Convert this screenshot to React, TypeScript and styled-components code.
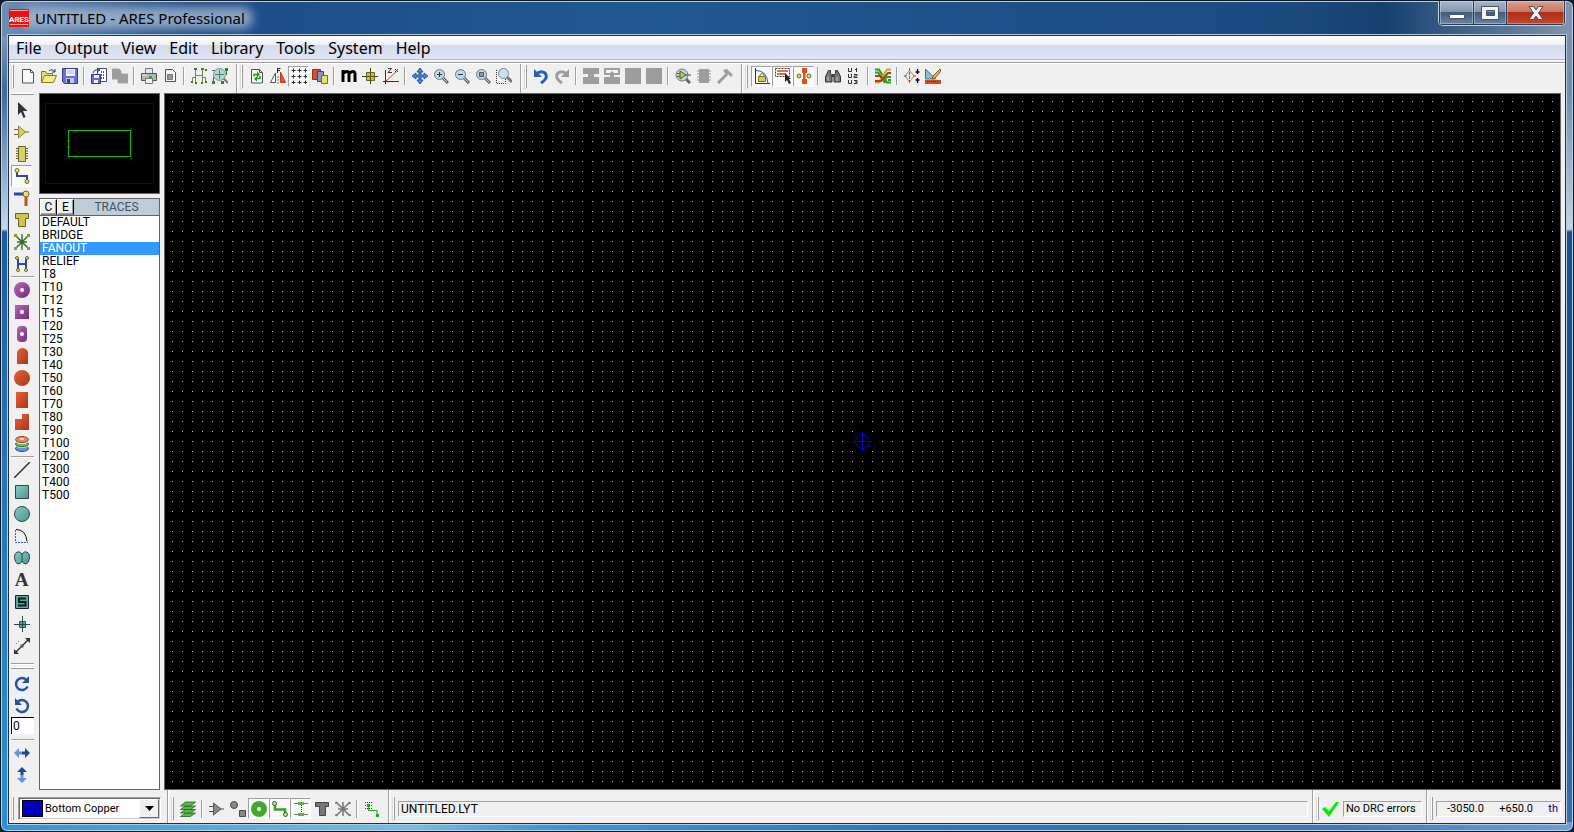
import React, { useState } from "react";
import styled, { createGlobalStyle, css } from "styled-components";

const uiFont = `"Noto Sans", "Open Sans", sans-serif`;
const smallFont = `Roboto, "Liberation Sans", sans-serif`;

const GlobalStyle = createGlobalStyle`
  * { box-sizing: border-box; }
  body { margin: 0; background: #0b1a2e; font-family: ${uiFont}; color: #000; }
  button, input, select { font: inherit; color: inherit; margin: 0; padding: 0; }
  ul { margin: 0; padding: 0; list-style: none; }
`;

/* ---------- window frame ---------- */

const Window = styled.div`
  display: flex;
  flex-direction: column;
  height: 100vh;
  padding: 0 7px 7px;
  border: 1px solid #0c1724;
  border-radius: 7px;
  box-shadow: inset 0 0 0 1px #b9cfe2;
  background:
    linear-gradient(90deg, #6f8db0 0, #5f83ad 30px, transparent 190px) top / 100% 36px no-repeat,
    linear-gradient(90deg, transparent 84%, #16406f 88%, #5c7797 96%, #8296ae) top / 100% 36px no-repeat,
    linear-gradient(90deg, #1c4783, #205890 40%, #1c4d84 75%, #163f6e) top / 100% 36px no-repeat,
    linear-gradient(90deg, #2b95d2, #49abdb 12%, #77bde2 26%, #3b9bd3 34%, #2777b4 60%, #3f7ab4 85%, #6aa0d6) bottom / 100% 9px no-repeat,
    linear-gradient(#7d95b0 36px, #3f6a9c 90px, #c3d8ea 228px, #1d5b9c 231px, #2271b3 50%, #2a90cd) left / 50% 100% no-repeat,
    linear-gradient(#7d90a8 36px, #6f8eb0 90px, #c3d3e2 228px, #18508c 231px, #1d5591 70%, #3770ae) right / 50% 100% no-repeat;
`;

const TitleBar = styled.header`
  display: flex;
  align-items: flex-start;
  justify-content: space-between;
  flex: none;
  height: 34px;
  padding-left: 1px;
`;

const Title = styled.h1`
  position: relative;
  display: flex;
  align-items: center;
  gap: 6px;
  margin: 0;
  height: 34px;
  font-size: 15px;
  line-height: 20px;
  font-weight: 400;
  &::before {
    content: "";
    position: absolute;
    inset: 6px -8px 6px 12px;
    border-radius: 10px;
    background: #a5b9d2cc;
    filter: blur(5px);
  }
  > * { position: relative; }
`;

const Caption = styled.div`
  display: flex;
  height: 25px;
  border: 1px solid #c3d0de;
  border-top: 0;
  border-radius: 0 0 5px 5px;
  overflow: hidden;
`;

const CaptionButton = styled.button<{ $w: number; $close?: boolean }>`
  display: grid;
  place-items: center;
  width: ${(p) => p.$w}px;
  border: 1px solid #2a3a50;
  border-top: 0;
  box-shadow: inset 0 0 0 1px #ffffff55;
  background: ${(p) =>
    p.$close
      ? "linear-gradient(#d9a090, #c9765f 48%, #b02d18 50%, #c4482c)"
      : "linear-gradient(#a9b8c9, #8296ad 48%, #3f5c7c 50%, #6a84a0)"};
  & + & { border-left: 0; }
`;

const Client = styled.div`
  display: flex;
  flex-direction: column;
  flex: 1;
  min-height: 0;
  border: 1px solid #1c2f4a;
  outline: 1px solid #b4cbe0;
  background: #f0f0f0;
`;

/* ---------- menu ---------- */

const MenuBar = styled.nav`
  display: flex;
  flex: none;
  height: 27px;
  padding-left: 7px;
  gap: 13px;
  border-bottom: 1px solid #a0a0a0;
  background: linear-gradient(#fff, #eef0f8 9px, #d5dbed 9px, #dfe5f4 23px, #b6bcd0 23px, #b6bcd0 24px, #f4f4f4 24px);
`;

const MenuButton = styled.button`
  height: 24px;
  border: 0;
  background: none;
  font-size: 16px;
  line-height: 24px;
`;

/* ---------- toolbars ---------- */

const ToolRow = styled.div`
  display: flex;
  flex: none;
  height: 30px;
  border-top: 1px solid #fff;
`;

const ToolGroup = styled.div<{ $last?: boolean }>`
  display: flex;
  align-items: center;
  padding: 0 6px 5px 3px;
  ${(p) => !p.$last && css`border-right: 1px solid #a0a0a0; box-shadow: 1px 0 #fff; margin-right: 1px;`}
`;

const Grip = styled.span`
  flex: none;
  width: 2px;
  height: 23px;
  margin-right: 3px;
  border-right: 1px solid #9a9a9a;
  border-left: 1px solid #fff;
  box-shadow: -1px 1px #d8d8d8;
`;

const Sep = styled.span`
  flex: none;
  width: 2px;
  height: 18px;
  margin: 0 3px;
  border-left: 1px solid #a0a0a0;
  border-right: 1px solid #fff;
`;

const ToolButton = styled.button<{ $pressed?: boolean }>`
  display: grid;
  place-items: center;
  flex: none;
  width: 21px;
  height: 21px;
  border: 1px solid transparent;
  background: none;
  ${(p) =>
    p.$pressed &&
    css`
      border-color: #a0a0a0 #fff #fff #a0a0a0;
      background: #f9f9f9;
    `}
`;

/* ---------- work area ---------- */

const Work = styled.main`
  display: flex;
  flex: 1;
  min-height: 0;
`;

const ModeBar = styled.div`
  display: flex;
  flex-direction: column;
  flex: none;
  width: 30px;
  padding-left: 2px;
`;

const ModeGrip = styled.span`
  flex: none;
  width: 23px;
  height: 2px;
  margin-bottom: 4px;
  border-top: 1px solid #fff;
  border-bottom: 1px solid #9a9a9a;
`;

const ModeButton = styled(ToolButton)`
  height: 22px;
`;

const ModeSep = styled.span<{ $wide?: boolean }>`
  flex: none;
  width: 23px;
  height: 2px;
  margin: ${(p) => (p.$wide ? "6px 0 2px" : "1px 0")};
  border-top: 1px solid #a0a0a0;
  border-bottom: 1px solid #fff;
`;

const LetterIcon = styled.span`
  font: 700 19px/20px "Liberation Serif", serif;
  color: #333;
`;

const AngleInput = styled.input`
  width: 23px;
  height: 17px;
  margin-bottom: 4px;
  padding: 0 1px;
  border: 0;
  border-top: 1px solid #000;
  border-left: 1px solid #000;
  background: #fff;
  font: 12px/15px ${smallFont};
`;

const Side = styled.aside`
  display: flex;
  flex-direction: column;
  flex: none;
  width: 121px;
  gap: 4px;
  margin-right: 4px;
`;

const Preview = styled.div`
  flex: none;
  height: 101px;
  border: 1px solid #646464;
  background: #000;
  svg { display: block; }
`;

const Selector = styled.section`
  flex: 1;
  min-height: 0;
  border: 1px solid #646464;
  background: #fff;
  font: 12px/13px ${smallFont};
`;

const SelectorHead = styled.div`
  display: flex;
  height: 17px;
  border-bottom: 1px solid #646464;
  background: #bfccd8;
  h2 {
    flex: 1;
    margin: 0;
    font: inherit;
    line-height: 16px;
    color: #44525e;
    text-align: center;
  }
`;

const HeadButton = styled.button`
  width: 17px;
  border: 1px solid #fff;
  border-right: 1px solid #000;
  border-bottom-color: #888;
  background: #f0f0f0;
  box-shadow: inset -1px -1px #a0a0a0;
`;

const TraceButton = styled.button<{ $on: boolean }>`
  display: block;
  width: 100%;
  height: 13px;
  padding-left: 2px;
  border: 0;
  text-align: left;
  line-height: 13px;
  background: ${(p) => (p.$on ? "#3399ff" : "none")};
  color: ${(p) => (p.$on ? "#fff" : "#000")};
`;

const Canvas = styled.div`
  position: relative;
  display: grid;
  place-items: center;
  flex: 1;
  min-width: 0;
  margin-right: 4px;
  border: 1px solid #646464;
  background: #000;
`;

const DotGrid = styled.svg`
  position: absolute;
  inset: 0;
  width: 100%;
  height: 100%;
`;

const Marker = styled.svg`
  position: relative;
`;

/* ---------- status bar ---------- */

const StatusBar = styled.footer`
  display: flex;
  flex: none;
  height: 33px;
  font: 11px/14px ${smallFont};
`;

const StatusGroup = styled(ToolGroup)<{ $grow?: boolean; $tight?: boolean }>`
  padding: 4px ${(p) => (p.$tight ? 4 : 6)}px 0 3px;
  ${(p) => p.$grow && "flex: 1;"}
`;

const LayerBox = styled.label`
  display: flex;
  align-items: center;
  width: 143px;
  height: 23px;
  margin-left: 1px;
  border: 1px solid #a0a0a0;
  border-right-color: #fff;
  border-bottom-color: #fff;
  box-shadow: inset 1px 1px #696969, inset -1px -1px #c8c8c8;
  background: #fff;
`;

const Swatch = styled.span`
  width: 21px;
  height: 17px;
  margin-left: 3px;
  border: 1px solid #000;
  background: #0000bf;
`;

const LayerSelect = styled.select`
  flex: 1;
  height: 19px;
  padding-left: 2px;
  border: 0;
  background: none;
  appearance: none;
  font: 11px/19px ${smallFont};
`;

const DropArrow = styled.span`
  display: grid;
  place-items: center;
  width: 20px;
  height: 19px;
  margin-right: 1px;
  border: 1px solid #fff;
  border-right-color: #696969;
  border-bottom-color: #696969;
  background: #f0f0f0;
  pointer-events: none;
`;

const Field = styled.output<{ $w?: number; $large?: boolean }>`
  display: flex;
  align-items: center;
  justify-content: space-between;
  height: 16px;
  padding: 0 2px;
  border: 1px solid #a0a0a0;
  border-right-color: #fff;
  border-bottom-color: #fff;
  white-space: nowrap;
  font-size: ${(p) => (p.$large ? 12 : 11)}px;
  ${(p) => (p.$w ? `width: ${p.$w}px; flex: none;` : "flex: 1;")}
`;

const Coords = styled(Field)`
  padding: 0 2px 0 10px;
  em { font-style: normal; color: #000080; }
`;

/* ---------- icons ---------- */

const dk = "#4a4a4a";
const page = <path d="M2.500 1.500h8l3 3v10.500h-11z" fill="#f4f9fc" stroke="#555" />;
const sheet = <path d="M10.500 1.500v3h3" fill="none" stroke="#555" />;
const lens = (
  <>
    <path d="M10 10l5 5" stroke="#666" strokeWidth="3" />
    <path d="M10 10l4 4" stroke="#c9c9c9" />
    <circle cx="6.500" cy="6.500" r="5" fill="#b9d7ea" stroke="#777" />
  </>
);

const icons: Record<string, React.ReactNode> = {
  new: <>{page}{sheet}</>,
  open: (
    <>
      <path d="M.5 14.500v-11h4l1 2h6v3" fill="#e8dc80" stroke="#8a7a20" />
      <path d="M.5 14.500l3-7h12l-3 7z" fill="#f4ea8e" stroke="#8a7a20" />
      <path d="M8 3q3-3 6 1m0-3v3h-3" fill="none" stroke="#1d3d7c" />
    </>
  ),
  save: (
    <>
      <path d="M.5.5h15v15H2.500l-2-2z" fill="#6a6ed0" stroke="#3b3d8c" />
      <path d="M4 1h9v7H4z" fill="#eef0fa" />
      <path d="M5 3h7M5 5h7" stroke="#b5b9dd" />
      <path d="M4 10h8v5H4z" fill="#c4c7d8" />
      <path d="M5 11h3v4H5z" fill="#3b3d8c" />
    </>
  ),
  import: (
    <>
      <path d="M6.500.5h9v13h-9z" fill="#fff" stroke="#444a9c" />
      <path d="M10 4h4M10 7h4M10 10h4" stroke="#e03010" strokeWidth="2" strokeDasharray="1 1" />
      <path d="M2 5q1-4 6-3M6 0l3 2-3 2" fill="none" stroke="#1d3d7c" />
      <path d="M.5 6.500h9v9h-9z" fill="#6a6ed0" stroke="#333580" />
      <path d="M3 7h5v3H3zM3 12h4v3H3z" fill="#eef0fa" />
    </>
  ),
  export: <path d="M0 1h7l2 2v3h7v9H6v-4H0z" fill="#9d9d9d" stroke="#a6a6a6" />,
  print: (
    <>
      <path d="M4.500 5.500v-5h7v5" fill="#dbe9f4" stroke="#777" />
      <path d="M.5 5.500h15v7H.5z" fill="#b5b5b5" stroke="#555" />
      <path d="M4.500 10.500h7v5h-7z" fill="#eef4f8" stroke="#777" />
      <path d="M8 8h3v2H8z" fill="#1db31d" />
      <path d="M1 7h5" stroke="#eee" />
    </>
  ),
  area: (
    <>
      <path d="M3.500 1.500h7l3 3v9h-10z" fill="#f4f6f8" stroke="#555" />
      <path d="M5.500 6.500h5v5h-5z" fill="#8b959c" stroke="#333" strokeDasharray="1 1" />
    </>
  ),
  netlist: (
    <>
      <path d="M4.500 2v12M11.500 2v12M4.500 7.500h7M1.500 14V9.500h3M14.500 14V9.500h-3" fill="none" stroke="#6c8f4c" />
      <path d="M3 0h3v2H3zM10 0h3v2h-3zM0 13h2v2H0zM4 14h2v2H4zM10 14h2v2h-2zM14 13h2v2h-2zM14 1h2v2h-2z" fill="#3f7a28" />
    </>
  ),
  netview: (
    <>
      <path d="M1.500 14V9M14.500 1v6M0 2.500h4" stroke="#3f7a28" />
      <path d="M11 10l5 5" stroke="#777" strokeWidth="2" />
      <circle cx="7.500" cy="6.500" r="6" fill="#b5d5dc" stroke="#78919c" />
      <path d="M3 6.500h9M7.500 2v9" stroke="#4d8a4a" />
      <path d="M0 13h3v3H0zM13 0h3v3h-3zM9 13h3v3H9z" fill="#3f7a28" />
    </>
  ),
  refresh: (
    <>
      {page}{sheet}
      <path d="M5 8.500V6.500h3M11 8v2.500H8" fill="none" stroke="#1b9c1b" strokeWidth="1.500" />
      <path d="M8 3.500l3 3-3 3zM8 8l-3 3 3 2.500z" fill="#1b9c1b" />
    </>
  ),
  flip: (
    <>
      <path d="M5.500 5v9.500H.5z" fill="#fff" stroke="#555" />
      <path d="M10.500 4v10.500h5z" fill="#e0512c" stroke="#b43d1c" />
      <path d="M8 16V7" stroke="#777" strokeDasharray="2 1" />
      <path d="M7.500 5V.5h3M8 2.500h2" fill="none" stroke="#222" />
    </>
  ),
  grid: (
    <>
      <path d="M0 2.500h16M0 8.500h16M0 14.500h16M2.500 0v16M8.500 0v16M14.500 0v16" stroke="#999" strokeDasharray="1 1" />
      <path d="M1 2.500h3M7 2.500h3M13 2.500h3M1 8.500h3M7 8.500h3M13 8.500h3M1 14.500h3M7 14.500h3M13 14.500h3M2.500 1v3M8.500 1v3M14.500 1v3M2.500 7v3M8.500 7v3M14.500 7v3M2.500 13v3M8.500 13v3M14.500 13v3" stroke="#333" />
    </>
  ),
  layers: (
    <>
      <path d="M.5 1.500h8v10h-8z" fill="#cc5530" stroke="#8f3316" />
      <path d="M5.500 3.500h6v10h-6z" fill="#8092e0" stroke="#39437c" />
      <path d="M9.500 7.500h6v8h-6z" fill="#f0e060" stroke="#7c7020" />
    </>
  ),
  m: <path d="M2 14V2M2 5.500q5-4 6 0V14M8 5.500q5-4 6 0V14" fill="none" stroke="#000" strokeWidth="3" />,
  origin: (
    <>
      <path d="M8.500 0v16M0 8.500h16" stroke="#3c3c2c" />
      <path d="M4.500 4.500h8v8h-8z" fill="#c8be30" stroke="#6b6420" />
      <path d="M8.500 4v9M4 8.500h9" stroke="#56501c" />
    </>
  ),
  zx: (
    <>
      <path d="M2.500 2v14M0 13.500h16" stroke="#333" />
      <path d="M3 13L13 4" stroke="#e0401c" />
      <path d="M5 .5h3.500l-3.500 4h4M12 1l3 3M15 1l-3 3" fill="none" stroke="#333" />
    </>
  ),
  pan: (
    <path d="M8 0l3 4H9v3h3V5l4 3-4 3V9H9v3h2l-3 4-3-4h2V9H4v2L0 8l4-3v2h3V4H5z" fill="#3b86dc" stroke="#164c94" strokeWidth=".8" />
  ),
  zoomin: <>{lens}<path d="M4 6.500h5M6.500 4v5" stroke="#333" /></>,
  zoomout: <>{lens}<path d="M4 6.500h5" stroke="#333" /></>,
  zoomall: <>{lens}<path d="M4.500 4.500h4v4h-4z" fill="#8a9aa6" stroke="#555" /></>,
  zoomarea: (
    <>
      <path d="M.5 2v13.500h9V10" fill="none" stroke="#333" strokeDasharray="1 1" />
      <path d="M11 9l5 5" stroke="#777" strokeWidth="3" />
      <circle cx="7.500" cy="5.500" r="5" fill="#c8e0f0" stroke="#888" />
    </>
  ),
  undo: (
    <>
      <path d="M3 6q5-4 9-1 4 5-4 10" fill="none" stroke="#2a5fae" strokeWidth="3" />
      <path d="M1 1v8h8z" fill="#2a5fae" />
    </>
  ),
  redo: (
    <>
      <path d="M13 6Q8 2 4 5q-4 5 4 10" fill="none" stroke="#9d9d9d" strokeWidth="3" />
      <path d="M15 1v8H7z" fill="#9d9d9d" />
    </>
  ),
  blockcopy: <path d="M0 0h16v6h-5v3h5v7H0V9h5V6H0z" fill="#9d9d9d" />,
  blockmove: (
    <>
      <path d="M1 1h14v5H1z" fill="#f6f6f6" stroke="#9d9d9d" strokeWidth="2" />
      <path d="M8 3l4 4h-2v2h6v7H0V9h6V7H4z" fill="#9d9d9d" />
    </>
  ),
  block: <path d="M0 0h16v16H0z" fill="#9d9d9d" />,
  pick: (
    <>
      <path d="M10 10l5 5" stroke="#666" strokeWidth="3" />
      <circle cx="7" cy="7" r="6" fill="#b9d7ea" stroke="#777" />
      <path d="M2 5.500h3M2 8.500h3M11 7h5" stroke="#5c5c1c" />
      <path d="M5 3l6 4-6 4z" fill="#c8c83c" stroke="#5c5c1c" />
    </>
  ),
  package: (
    <>
      <path d="M3 1h10v14H3z" fill="#9d9d9d" />
      <path d="M1 3h14M1 6h14M1 9h14M1 12h14" stroke="#9d9d9d" />
    </>
  ),
  hammer: (
    <>
      <path d="M1 15L10 6" stroke="#9d9d9d" strokeWidth="3" />
      <path d="M6 2l4-1 6 6-2 2-3-3-2 1z" fill="#9d9d9d" />
    </>
  ),
  lock: (
    <>
      <path d="M1.500 0v15.500H16" fill="none" stroke="#333" />
      <path d="M2 2.500q11 0 12 13" fill="none" stroke="#3d5cb0" />
      <path d="M4.500 8.500h7v5h-7z" fill="#d8cc40" stroke="#7c7420" />
      <path d="M6 8V6.500q2-2 4 0V8" fill="none" stroke="#7c7420" />
    </>
  ),
  select: (
    <>
      <path d="M.5.500h14v8H.5z" fill="none" stroke="#444" strokeDasharray="2 1" />
      <path d="M2 3h11M2 6h9" stroke="#dc4420" strokeWidth="1.500" />
      <path d="M10 5v9l2-2 2 4 2-1-2-4h2z" fill="#222" />
    </>
  ),
  neck: (
    <>
      <path d="M6 0h5v5H9.500v6H11v5H6v-5h1V5H6z" fill="#e0501c" />
      <circle cx="3" cy="8" r="2" fill="#e8dc50" stroke="#6c6420" />
      <circle cx="13" cy="8" r="2" fill="#e8dc50" stroke="#6c6420" />
    </>
  ),
  find: (
    <>
      <path d="M3.500 2.500h2v3l1.500 2v6.500H.5V8.500zM10.500 2.500h2l3 6V14H9V7.500l1.500-2z" fill="#777" stroke="#333" />
      <path d="M6 6h4v3H6z" fill="#444" />
      <path d="M3 9v4M12 9v4" stroke="#ccc" />
    </>
  ),
  annotate: (
    <path
      d="M2.500 0v3.500h3V0M2.500 6v3.500h3V6M2.500 12v3.500h3V12M9 1.500h1.500M10.500 0v4M8 6.500h3v1.500h-3v1.500h3.500M8 12.500h3v3H8M9 14h2"
      fill="none" stroke="#333"
    />
  ),
  autoroute: (
    <>
      <path d="M0 1.500h4l8 13h4M0 4.500h3l7 10.500" fill="none" stroke="#2e9c20" strokeWidth="2" />
      <path d="M16 1.500h-4L4 14.500H0" fill="none" stroke="#b8b81c" strokeWidth="2" />
      <path d="M16 5h-3L6 13H0M0 8h5l3 3" fill="none" stroke="#c83020" strokeWidth="2" />
      <path d="M16 9h-4l-2 2M16 12h-3" fill="none" stroke="#2e9c20" strokeWidth="2" />
    </>
  ),
  connect: (
    <>
      <path d="M5.500 2.500L1 8l4.500 6M5.500 2.500L10 8l-4.500 6" fill="none" stroke="#c88040" />
      <path d="M5.500 0v16M0 8h3M9 8h3" stroke="#3c6cb0" strokeDasharray="3 1" />
      <path d="M13.500 1v5M13.500 10v5M11.500 4h4M11.500 12h4" stroke="#111" strokeWidth="1.500" />
    </>
  ),
  design: (
    <>
      <path d="M.5 1v10h10z" fill="#7fc4cc" stroke="#2c7c88" />
      <path d="M15 1L8 8l-1 3 3-1 6-7z" fill="#e8b060" stroke="#8c5020" />
      <path d="M0 12h16v4H0z" fill="#cc4c20" />
      <path d="M2 13.500h12" stroke="#7c2408" strokeDasharray="1 1" />
    </>
  ),
  cursor: <path d="M4 0v13l3-3 2.500 6 2-1L9 9h4.500z" fill="#333" />,
  component: (
    <>
      <path d="M0 5.500h5M0 10.500h5M11 8h4" stroke="#6c6420" />
      <path d="M4.500 2v12L11.500 8z" fill="#d8cc58" stroke="#8c8430" />
    </>
  ),
  chip: (
    <>
      <path d="M2 2.500h12M2 5h12M2 7.500h12M2 10h12M2 12.500h12" stroke="#5c5620" />
      <path d="M4.500.5h7v15h-7z" fill="#d8d068" stroke="#6c6420" />
    </>
  ),
  trace: (
    <>
      <path d="M3 3v5h10v5" fill="none" stroke="#2a47b0" strokeWidth="2" />
      <circle cx="3" cy="2.500" r="2" fill="#f0e440" stroke="#6c6420" />
      <circle cx="13" cy="13.500" r="2" fill="#f0e440" stroke="#6c6420" />
    </>
  ),
  via: (
    <>
      <path d="M0 4h10" stroke="#2a47a0" strokeWidth="3" />
      <path d="M12 5v11" stroke="#cc4c20" strokeWidth="3" />
      <circle cx="12" cy="4" r="3" fill="#e4dc80" stroke="#6c6420" />
    </>
  ),
  pad: <path d="M1.500 1.500h13v5h-3v8h-7v-8h-3z" fill="#d0c450" stroke="#6c6420" />,
  ratsnest: (
    <>
      <path d="M1 1l14 14M15 1L1 15M8 1v14M3 8h10" stroke="#3c6c34" strokeWidth="1.500" />
      <path d="M0 0h3v3H0zM13 0h3v3h-3zM0 13h3v3H0zM13 13h3v3h-3zM7 0h2v2H7zM7 14h2v2H7z" fill="#8c9c30" />
    </>
  ),
  connectivity: (
    <>
      <path d="M4 3v10M12 3v10M4 8h8" stroke="#2a47b0" strokeWidth="2" />
      <g fill="#f0e440" stroke="#6c6420">
        <circle cx="3" cy="2" r="1.500" /><circle cx="13" cy="2" r="1.500" />
        <circle cx="4" cy="14" r="1.500" /><circle cx="12" cy="14" r="1.500" />
      </g>
    </>
  ),
  padround: <><circle cx="8" cy="8" r="8" fill="url(#purple)" /><circle cx="8" cy="8" r="2" fill="#fff" /></>,
  padsquare: <><path d="M1 1h14v14H1z" fill="url(#purple)" /><circle cx="8" cy="8" r="2" fill="#fff" /></>,
  paddil: <><rect x="3" width="10" height="16" rx="4" fill="url(#purple)" /><circle cx="8" cy="8" r="2" fill="#fff" /></>,
  padedge: <path d="M3 16V4q2-4 5.500-4T14 4v12z" fill="url(#rust)" />,
  smtround: <circle cx="8" cy="8" r="8" fill="url(#rust)" />,
  smtrect: <path d="M2 0h12v16H2z" fill="url(#rust)" />,
  smtpoly: <path d="M8 0h7v16H1V5h7z" fill="url(#rust)" />,
  padstack: (
    <>
      <ellipse cx="8" cy="12.500" rx="6.500" ry="3" fill="#6c90e0" stroke="#39437c" />
      <ellipse cx="8" cy="10" rx="6" ry="2" fill="#b8cce8" />
      <ellipse cx="8" cy="8" rx="6.500" ry="2.500" fill="#74c848" stroke="#2c6c1c" />
      <ellipse cx="8" cy="6" rx="6" ry="2" fill="#d0e8c0" />
      <ellipse cx="8" cy="3.500" rx="6.500" ry="3" fill="#f08060" stroke="#8f4430" />
      <ellipse cx="8" cy="3" rx="2" ry="1" fill="#fff" />
    </>
  ),
  line: <path d="M0 16L16 0" stroke="#333" strokeWidth="1.500" />,
  box: <path d="M1.500 1.500h13v13h-13z" fill="url(#teal)" stroke="#2c4c4c" />,
  circle: <circle cx="8" cy="8" r="7.500" fill="url(#teal)" stroke="#2c4c4c" />,
  arc: (
    <>
      <path d="M2 1.500q10 0 11 12" fill="none" stroke="#111" />
      <path d="M1.500 2v12.500H14" fill="none" stroke="#2060dc" strokeDasharray="2 1" />
    </>
  ),
  path: (
    <path d="M8 4Q6 1 3 2 0 4 .5 8 1 13 4 14q3 0 4-3 1 3 4 3 3-1 3.500-6Q16 3 13 2 10 1 8 4zv7" fill="url(#teal)" stroke="#2c4c4c" />
  ),
  symbol: (
    <>
      <path d="M1.500 1.500h13v13h-13z" fill="#5ca89c" stroke="#112233" />
      <path d="M12 4.500H5V8h6.500v3.500H4" fill="none" stroke="#0c1c1c" strokeWidth="2" />
    </>
  ),
  marker: (
    <>
      <path d="M8.500 0v16M0 8.500h16" stroke="#444" />
      <path d="M5.500 5.500h6v6h-6z" fill="#4ca8a8" stroke="#245c5c" />
      <path d="M8.500 5v7M5 8.500h7" stroke="#1c4c4c" />
    </>
  ),
  measure: (
    <>
      <path d="M2 14L14 2" stroke="#333" strokeWidth="1.500" />
      <path d="M16 0v5l-5-5zM0 16v-5l5 5z" fill="#333" />
      <path d="M6.500 6.500h3v3h-3z" fill="#555" />
      <path d="M2 6l4-4" stroke="#555" strokeDasharray="1 2" />
    </>
  ),
  rotcw: (
    <>
      <path d="M13.500 10.500A6 6 0 1 1 12.500 4" fill="none" stroke="#2a50a8" strokeWidth="2.500" />
      <path d="M15 0v7H8z" fill="#2a50a8" />
    </>
  ),
  rotccw: (
    <>
      <path d="M2.500 10.500A6 6 0 1 0 3.500 4" fill="none" stroke="#2a50a8" strokeWidth="2.500" />
      <path d="M1 0v7h7z" fill="#2a50a8" />
    </>
  ),
  mirrorh: (
    <>
      <path d="M0 8l5-5v3.500h3v3H5V13z" fill="#6c90dc" />
      <path d="M16 8l-5-5v3.500H8v3h3V13z" fill="#1c48a0" />
    </>
  ),
  mirrorv: (
    <>
      <path d="M8 16l5-5H9.500V8h-3v3H3z" fill="#6c90dc" />
      <path d="M8 0l5 5H9.500v3h-3V5H3z" fill="#1c48a0" />
    </>
  ),
  layerset: (
    <g fill="#5cb848" stroke="#24601c" strokeWidth=".8">
      <path d="M.5 15.500l5-3.500h10l-5 3.500z" /><path d="M.5 12l5-3.500h10l-5 3.500z" />
      <path d="M.5 8.500l5-3.500h10l-5 3.500z" /><path d="M.5 5l5-4h10l-5 4z" />
    </g>
  ),
  fcomponent: (
    <>
      <path d="M0 5.500h5M0 10.500h5M11 8h4" stroke={dk} />
      <path d="M4.500 2v12L12 8z" fill="#888" stroke="#555" />
    </>
  ),
  fgraphic: (
    <>
      <circle cx="4" cy="4" r="3.500" fill="#888" stroke={dk} />
      <path d="M9.500 9.500h6v6h-6z" fill="#888" stroke={dk} />
    </>
  ),
  fpin: <><circle cx="8" cy="8" r="8" fill="#46a830" /><circle cx="8" cy="8" r="2" fill="#fff" /></>,
  ftrack: (
    <>
      <path d="M3 3v5.500h10V13" fill="none" stroke="#3c9c2c" strokeWidth="2.500" />
      <circle cx="2.500" cy="2.500" r="2" fill="#b8ec80" stroke="#2c6c1c" />
      <circle cx="13.500" cy="13.500" r="2" fill="#b8ec80" stroke="#2c6c1c" />
    </>
  ),
  fvia: (
    <>
      <path d="M1 2.500h14M1 13.500h14" stroke="#5c8c4c" />
      <path d="M5 1h6v3H5zM5 12h6v3H5z" fill="#58b840" />
      <path d="M8.500 4v8" stroke="#333" strokeDasharray="1 1" />
    </>
  ),
  fzone: <path d="M1.500 1.500h13v4h-3v9h-6v-9h-4z" fill="#777" stroke="#444" />,
  frats: (
    <path d="M1 1l14 14M15 1L1 15M8 1v14M3 8h10M0 2h3M13 2h3M0 14h3M13 14h3" stroke="#777" strokeWidth="1.500" />
  ),
  realtime: (
    <>
      <path d="M1 1.500h7M1 4.500h7M1 7.500h7" stroke="#444" strokeDasharray="1 1" />
      <path d="M4.500 4v5.500H13V14" fill="none" stroke="#2c9c1c" />
      <path d="M3 3h3v3H3zM12 13h3v3h-3z" fill="#18b018" />
    </>
  ),
};

function Icon({ name }: { name: string }) {
  if (name === "text") return <LetterIcon>A</LetterIcon>;
  return (
    <svg width="16" height="16" viewBox="0 0 16 16" aria-hidden="true">
      {icons[name]}
    </svg>
  );
}

const HiddenDefs = styled.svg`
  position: absolute;
`;

function Gradients() {
  const stops: [string, string, string][] = [
    ["purple", "#b868b8", "#702c78"],
    ["rust", "#e8603c", "#a83818"],
    ["teal", "#88ccc4", "#4c9490"],
  ];
  return (
    <HiddenDefs width="0" height="0" aria-hidden="true">
      <defs>
        {stops.map(([id, a, b]) => (
          <linearGradient key={id} id={id} x1="0" y1="0" x2="1" y2="1">
            <stop offset="0" stopColor={a} />
            <stop offset="1" stopColor={b} />
          </linearGradient>
        ))}
      </defs>
    </HiddenDefs>
  );
}

/* "|" stands for a separator, a leading "*" for a pressed button */
const toolGroups = [
  "new open save | import export | print area | netlist netview",
  "refresh flip *grid layers | m origin zx | pan zoomin zoomout zoomall zoomarea",
  "undo redo | blockcopy blockmove block block | pick package hammer",
  "*lock *select *neck | find annotate | autoroute | connect design",
];
const modes = [
  "cursor component chip *trace via pad ratsnest connectivity",
  "padround padsquare paddil padedge smtround smtrect smtpoly padstack",
  "line box circle arc path text symbol marker measure",
];
const filters = "layerset | fcomponent fgraphic *fpin *ftrack *fvia fzone frats | realtime";
const menus = ["File", "Output", "View", "Edit", "Library", "Tools", "System", "Help"];
const traces = [
  "DEFAULT", "BRIDGE", "FANOUT", "RELIEF", "T8", "T10", "T12", "T15", "T20", "T25", "T30",
  "T40", "T50", "T60", "T70", "T80", "T90", "T100", "T200", "T300", "T400", "T500",
];

function Tools({ items, vertical }: { items: string; vertical?: boolean }) {
  const Button = vertical ? ModeButton : ToolButton;
  return (
    <>
      {items.split(" ").map((item, i) => {
        if (item === "|") return <Sep key={i} />;
        const pressed = item.startsWith("*");
        const name = item.replace("*", "");
        return (
          <Button key={i} $pressed={pressed} aria-pressed={pressed} aria-label={name}>
            <Icon name={name} />
          </Button>
        );
      })}
    </>
  );
}

export default function App() {
  const [trace, setTrace] = useState("FANOUT");
  return (
    <Window>
      <GlobalStyle />
      <Gradients />
      <TitleBar>
        <Title>
          <svg width="20" height="18" viewBox="0 0 20 18" aria-hidden="true">
            <path d="M0 0h20v18H0z" fill="#f01010" />
            <path d="M1 15.500h18M1 1.500h18" stroke="#ff9c9c" />
            <text x="10" y="13" textAnchor="middle" fontFamily="Roboto, sans-serif" fontWeight="700" fontSize="8" fill="#fff">ARES</text>
          </svg>
          <span>UNTITLED - ARES Professional</span>
        </Title>
        <Caption>
          <CaptionButton $w={35} aria-label="Minimize">
            <svg width="18" height="18" viewBox="0 0 18 18">
              <path d="M1.500 10.500h15v4h-15z" fill="#fff" stroke="#4a5566" />
            </svg>
          </CaptionButton>
          <CaptionButton $w={33} aria-label="Maximize">
            <svg width="18" height="18" viewBox="0 0 18 18">
              <path d="M.5 2.500h17v13H.5zM5.500 6.500v5h8v-5z" fill="#f4f4f4" fillRule="evenodd" stroke="#4a5566" />
            </svg>
          </CaptionButton>
          <CaptionButton $w={58} $close aria-label="Close">
            <svg width="18" height="18" viewBox="0 0 18 18">
              <path d="M2 2.500h4.500L9 6l2.500-3.500H16L11.500 9l4.500 6.500h-4.500L9 12l-2.500 3.500H2L6.500 9z" fill="#f4f4f4" stroke="#5c4a50" />
            </svg>
          </CaptionButton>
        </Caption>
      </TitleBar>
      <Client>
        <MenuBar>
          {menus.map((m) => <MenuButton key={m}>{m}</MenuButton>)}
        </MenuBar>
        <ToolRow role="toolbar">
          {toolGroups.map((g, i) => (
            <ToolGroup key={i} $last={i === toolGroups.length - 1}>
              <Grip />
              <Tools items={g} />
            </ToolGroup>
          ))}
        </ToolRow>
        <Work>
          <ModeBar role="toolbar">
            <ModeGrip />
            <Tools items={modes[0]} vertical />
            <ModeSep />
            <Tools items={modes[1]} vertical />
            <ModeSep />
            <Tools items={modes[2]} vertical />
            <ModeSep $wide />
            <ModeGrip />
            <Tools items="rotcw rotccw" vertical />
            <AngleInput aria-label="Rotation angle" defaultValue="0" />
            <ModeSep />
            <Tools items="mirrorh mirrorv" vertical />
          </ModeBar>
          <Side>
            <Preview>
              <svg width="119" height="98" viewBox="0 0 119 98" aria-hidden="true">
                <path d="M5.500 9.500h108v80h-108z" fill="none" stroke="#0000b0" />
                <path d="M28.500 36.500h62v26h-62z" fill="none" stroke="#00c000" />
              </svg>
            </Preview>
            <Selector>
              <SelectorHead>
                <HeadButton>C</HeadButton>
                <HeadButton>E</HeadButton>
                <h2>TRACES</h2>
              </SelectorHead>
              <ul>
                {traces.map((t) => (
                  <li key={t}>
                    <TraceButton $on={t === trace} onClick={() => setTrace(t)}>{t}</TraceButton>
                  </li>
                ))}
              </ul>
            </Selector>
          </Side>
          <Canvas>
            <DotGrid aria-hidden="true">
              <pattern id="dots" width="10" height="10" patternUnits="userSpaceOnUse">
                <rect x="7" y="7" width="1" height="1" fill="#c0c0c0" />
              </pattern>
              <rect width="100%" height="100%" fill="url(#dots)" />
            </DotGrid>
            <Marker width="21" height="21" viewBox="0 0 21 21" shapeRendering="crispEdges" aria-hidden="true">
              <circle cx="10.500" cy="10.500" r="7" fill="none" stroke="#0000c8" />
              <path d="M10.500 0v21M0 10.500h21" stroke="#0000c8" />
            </Marker>
          </Canvas>
        </Work>
        <StatusBar>
          <StatusGroup>
            <Grip />
            <LayerBox>
              <Swatch />
              <LayerSelect aria-label="Layer">
                <option>Bottom Copper</option>
                <option>Top Copper</option>
              </LayerSelect>
              <DropArrow>
                <svg width="9" height="5" viewBox="0 0 9 5"><path d="M0 0h9L4.500 5z" /></svg>
              </DropArrow>
            </LayerBox>
          </StatusGroup>
          <StatusGroup>
            <Grip />
            <Tools items={filters} />
          </StatusGroup>
          <StatusGroup $grow $tight>
            <Grip />
            <Field $large>UNTITLED.LYT</Field>
          </StatusGroup>
          <StatusGroup $tight>
            <Grip />
            <svg width="21" height="16" viewBox="0 0 21 16" aria-hidden="true">
              <path d="M0 8l3-2 4 4 7-9h3L7 16z" fill="#00f000" />
            </svg>
            <Field $w={79}>No DRC errors</Field>
          </StatusGroup>
          <StatusGroup $last $tight>
            <Grip />
            <Coords $w={125}>
              <span>-3050.0</span>
              <span>+650.0</span>
              <em>th</em>
            </Coords>
          </StatusGroup>
        </StatusBar>
      </Client>
    </Window>
  );
}
